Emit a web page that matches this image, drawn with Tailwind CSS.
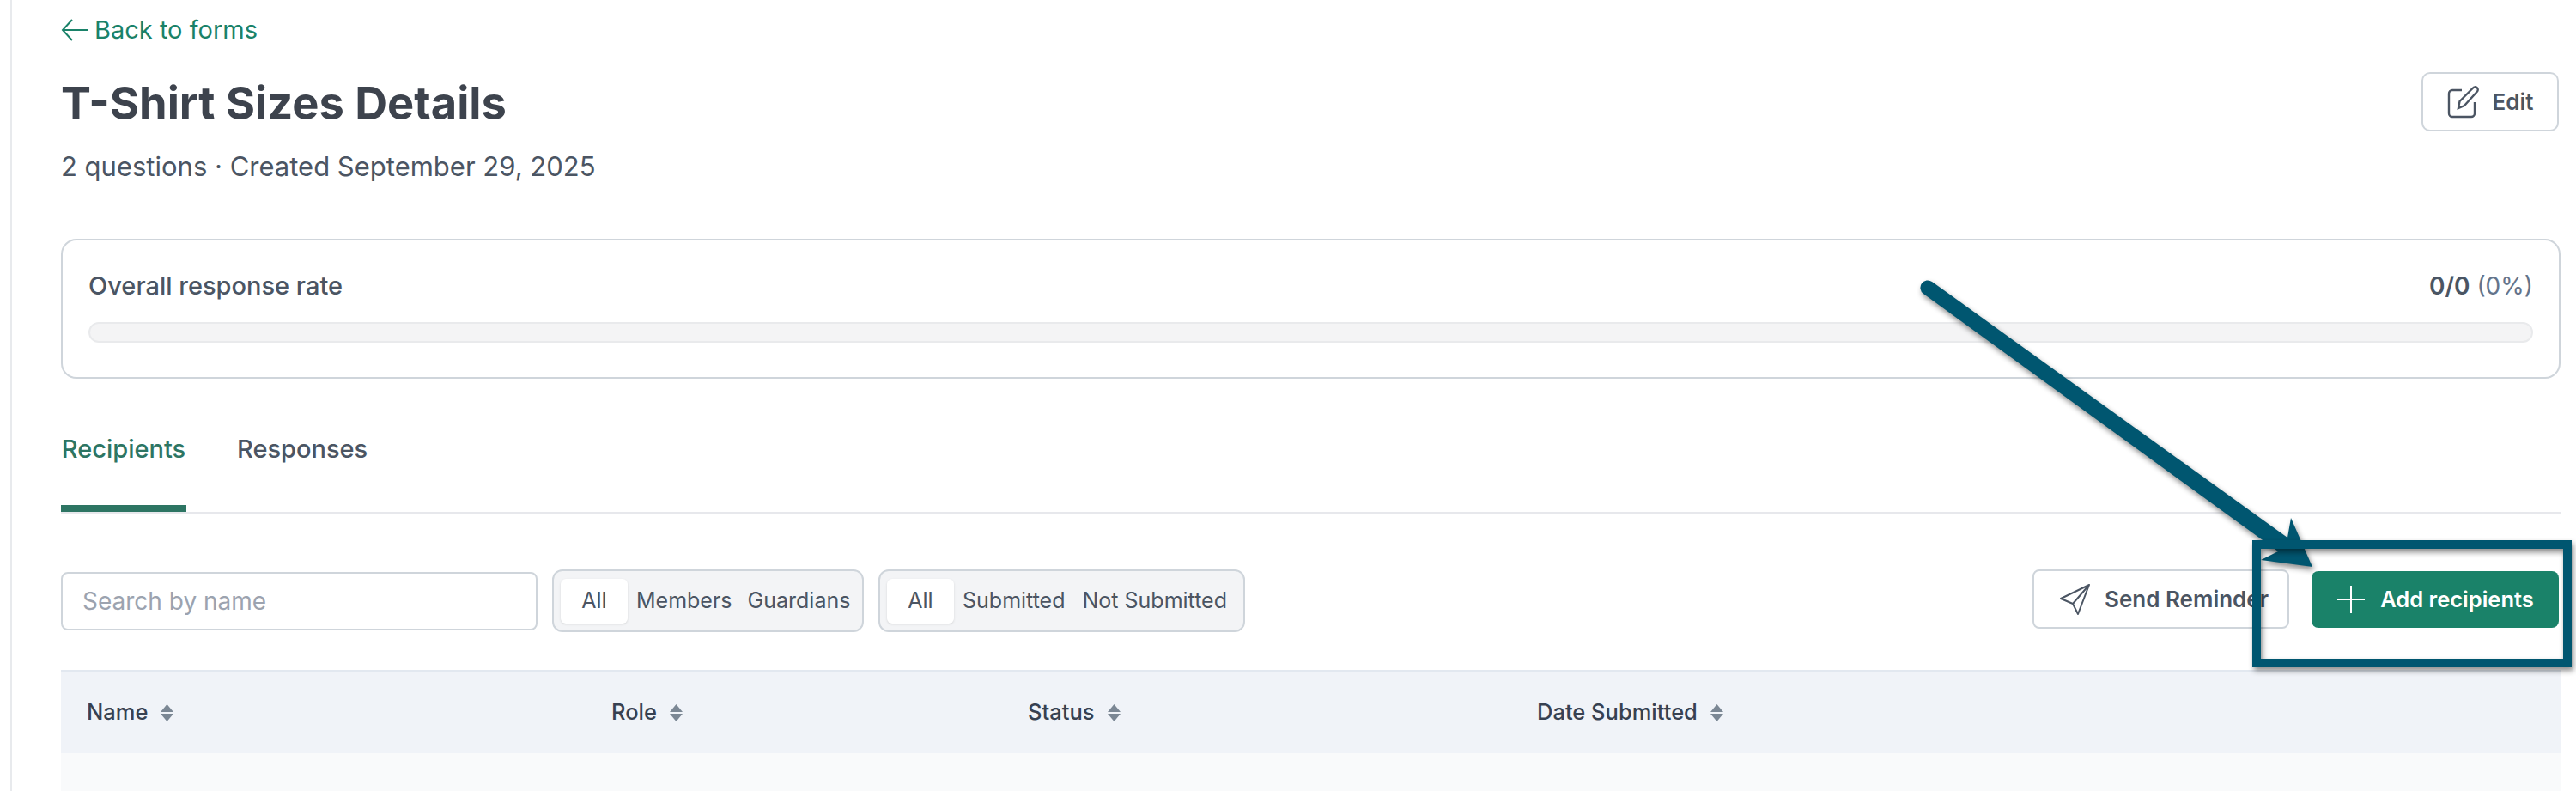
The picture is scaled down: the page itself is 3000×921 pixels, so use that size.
<!DOCTYPE html>
<html>
<head>
<meta charset="utf-8">
<script src="https://cdn.jsdelivr.net/npm/@tailwindcss/browser@4"></script>
<title>T-Shirt Sizes Details</title>
</head>
<body class="bg-white font-['Inter',sans-serif] text-[#3f4854]">
<div class="relative h-[921px] w-[3000px] overflow-hidden">
  <!-- sidebar edge + page -->
  <div class="ml-3 h-full border-l-2 border-[#e8eaed] pl-[57px] pr-[18px]">
    <a class="flex h-[37px] items-center gap-[7px] pt-[32px] text-[29px] text-[#1a8269]">
      <svg class="h-[32px] w-[32px]" viewBox="0 0 32 32" fill="none" stroke="currentColor" stroke-width="2"><path d="M31 16H2M13 4 2 16l11 12"/></svg>
      <span>Back to forms</span>
    </a>

    <div class="mt-[47px] flex items-start justify-between">
      <div class="pt-[4px]">
        <h1 class="text-[52.400px] leading-[64px] font-bold text-[#3d434d]">T-Shirt Sizes Details</h1>
        <p class="mt-[22px] text-[31px] leading-[40px] text-[#4b5563]">2 questions · Created September 29, 2025</p>
      </div>
      <button class="mr-[2px] flex h-[69px] w-[160px] items-center justify-center gap-[15px] rounded-[10px] border-2 border-[#cfd5db] text-[26px] font-semibold text-[#4b5563]">
        <svg class="h-[38px] w-[38px]" viewBox="0 0 38 38" fill="none" stroke="currentColor" stroke-width="2.4"><path d="M17 5H6a4 4 0 0 0-4 4v23a4 4 0 0 0 4 4h22a4 4 0 0 0 4-4V19"/><path d="M13 26l1.500-8L30 2.500a3 3 0 0 1 5 4L20 23z"/></svg>
        Edit
      </button>
    </div>

    <!-- response rate -->
    <div class="mt-[64px] h-[163px] rounded-[18px] border-2 border-[#cfd5db] px-[30px] pt-[34px]">
      <div class="flex h-[38px] items-center justify-between">
        <span class="text-[29px] font-medium text-[#4b5563]">Overall response rate</span>
        <span class="text-[28px] text-[#64748b]"><b class="font-semibold text-[#4b5563]">0/0</b> (0%)</span>
      </div>
      <div class="mt-[23px] h-[24px] rounded-full border-2 border-[#e9eaec] bg-[#f4f4f5]"></div>
    </div>

    <!-- tabs -->
    <div class="mt-[49px] flex h-[108px] gap-[59px] border-b-2 border-[#e7e8ec] text-[29px] font-medium">
      <div class="h-[106px] w-[146px] border-b-8 border-[#2d7563] pt-[13px] text-center leading-[40px] text-[#2d7563]">Recipients</div>
      <div class="pt-[13px] leading-[40px] text-[#4b5563]">Responses</div>
    </div>

    <!-- toolbar -->
    <div class="mt-[65px] flex h-[73px] items-start text-[25px]">
      <div class="mt-[3px] flex h-[68px] w-[555px] items-center rounded-[8px] border-2 border-[#cfd5db] pl-[23px] text-[28px] text-[#9ca3af]">Search by name</div>
      <div class="ml-[17px] flex h-[73px] w-[363px] items-center rounded-[12px] border-2 border-[#cfd5db] bg-[#f3f4f6] pl-[8px] text-[#4b5563]">
        <span class="flex h-[52px] w-[78px] items-center justify-center rounded-[6px] bg-white shadow-sm">All</span>
        <span class="ml-[10px]">Members</span>
        <span class="ml-[18px]">Guardians</span>
      </div>
      <div class="ml-[17px] flex h-[73px] w-[427px] items-center rounded-[12px] border-2 border-[#cfd5db] bg-[#f3f4f6] pl-[8px] text-[#4b5563]">
        <span class="flex h-[52px] w-[78px] items-center justify-center rounded-[6px] bg-white shadow-sm">All</span>
        <span class="ml-[10px]">Submitted</span>
        <span class="ml-[20px]">Not Submitted</span>
      </div>
      <div class="mr-[2px] ml-auto flex items-start gap-[26px]">
        <button class="flex h-[69px] w-[299px] items-center gap-[16px] rounded-[8px] border-2 border-[#cfd5db] pl-[30px] text-[26px] font-semibold text-[#4b5563]">
          <svg class="h-[36px] w-[36px]" viewBox="0 0 36 36" fill="none" stroke="currentColor" stroke-width="2" stroke-linejoin="round"><path d="M34 1 1 17l14 6 6 12zM34 1 15 23"/></svg>
          Send Reminder
        </button>
        <button class="mt-[2px] flex h-[66px] w-[288px] items-center justify-center gap-[17px] rounded-[8px] bg-[#1a8269] text-[25.500px] font-semibold text-white">
          <svg class="h-[34px] w-[34px]" viewBox="0 0 34 34" fill="none" stroke="currentColor" stroke-width="2"><path d="M17 1v32M1 17h32"/></svg>
          Add recipients
        </button>
      </div>
    </div>

    <!-- table -->
    <div class="mt-[44px] grid h-[97px] grid-cols-[611px_485px_593px_1fr] items-center border-t-2 border-[#e2e8f0] bg-[#f0f3f8] pl-[30px] text-[25.500px] font-medium text-[#374151]">
      <div class="flex items-center gap-[15px]">Name <svg class="h-[20px] w-[15px]" viewBox="0 0 15 20" fill="#7b8794"><path d="M7.500 0 15 9H0zM7.500 20 0 11h15z"/></svg></div>
      <div class="flex items-center gap-[15px]">Role <svg class="h-[20px] w-[15px]" viewBox="0 0 15 20" fill="#7b8794"><path d="M7.500 0 15 9H0zM7.500 20 0 11h15z"/></svg></div>
      <div class="flex items-center gap-[15px]">Status <svg class="h-[20px] w-[15px]" viewBox="0 0 15 20" fill="#7b8794"><path d="M7.500 0 15 9H0zM7.500 20 0 11h15z"/></svg></div>
      <div class="flex items-center gap-[15px]">Date Submitted <svg class="h-[20px] w-[15px]" viewBox="0 0 15 20" fill="#7b8794"><path d="M7.500 0 15 9H0zM7.500 20 0 11h15z"/></svg></div>
    </div>
    <div class="h-[60px] bg-[#f9fafb]"></div>
  </div>

  <!-- annotation arrow and box drawn over the screenshot -->
  <svg class="absolute top-0 left-0 h-[921px] w-[3000px]" viewBox="0 0 3000 921" fill="none">
    <path class="drop-shadow-[2px_4px_3px_rgba(0,0,0,0.45)]" d="M2250 328 2664 626 2668 603 2693 660 2633 652 2653 642 2240 342A8.500 8.500 0 0 1 2250 328z" fill="#005670"/>
    <rect class="drop-shadow-[2px_4px_3px_rgba(0,0,0,0.45)]" x="2628" y="634" width="362" height="138" stroke="#005670" stroke-width="10"/>
  </svg>
</div>
</body>
</html>
